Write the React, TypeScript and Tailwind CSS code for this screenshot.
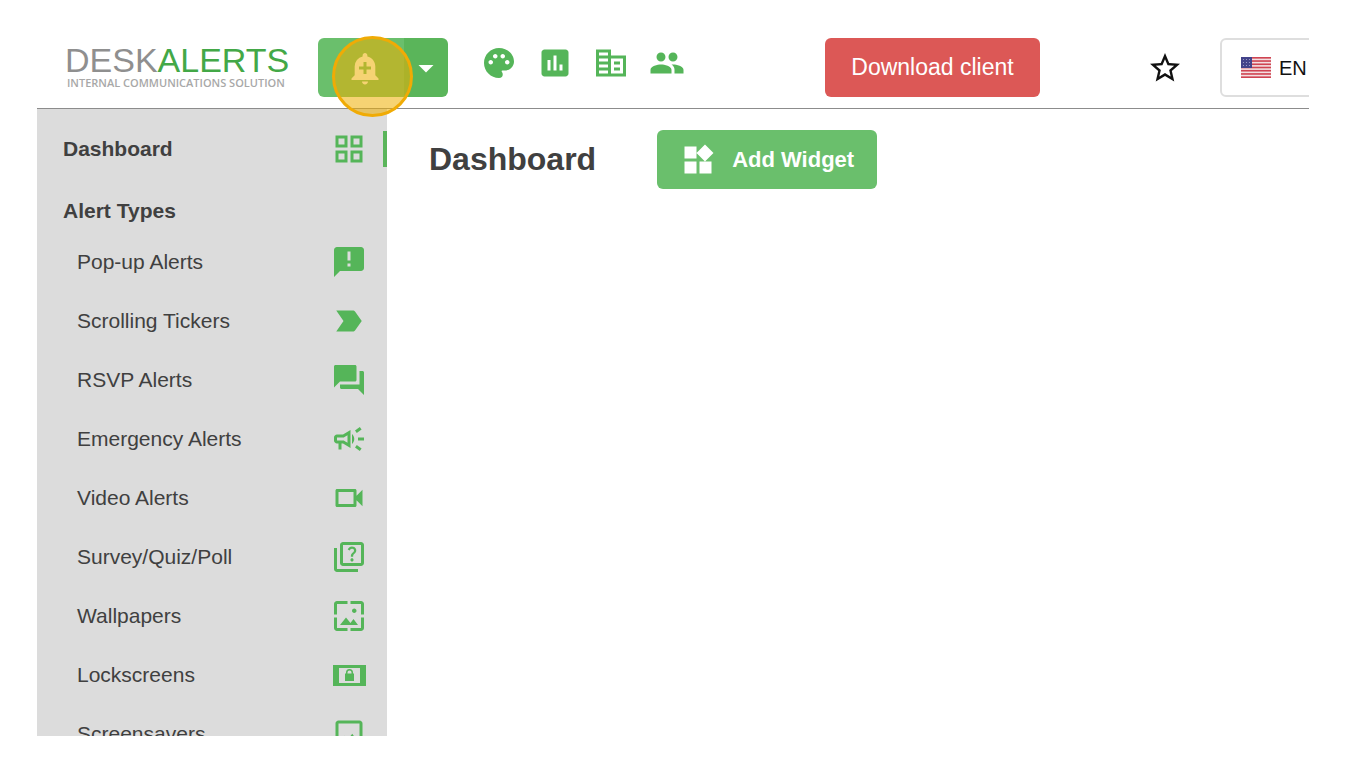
import { useState } from "react";
import type { ComponentType } from "react";
import {
  MdAddAlert,
  MdAnnouncement,
  MdArrowDropDown,
  MdAssessment,
  MdCorporateFare,
  MdForum,
  MdLabelImportant,
  MdOutlineCampaign,
  MdOutlineGridView,
  MdOutlineImage,
  MdOutlineQuiz,
  MdOutlineVideocam,
  MdPalette,
  MdPeople,
  MdStarBorder,
  MdWallpaper,
  MdWidgets,
} from "react-icons/md";

interface MenuItem {
  title: string;
  icon: ComponentType<{ size?: number }>;
}

function LockscreenIcon({ size = 36 }: { size?: number }) {
  return (
    <svg width={size} height={size} viewBox="0 0 36 36" fill="currentColor">
      <path fillRule="evenodd" d="M2 8h33v21H2zM8 11v15h21V11z" />
      <path
        fillRule="evenodd"
        d="M14 16.500h1v-1a3.500 3.500 0 0 1 7 0v1h1V24h-9zM16.500 16.500h4v-1a2 2 0 0 0-4 0z"
      />
    </svg>
  );
}

function FlagIcon() {
  return (
    <svg width="30" height="21" viewBox="0 0 30 21" className="shrink-0">
      <rect width="30" height="21" fill="#f3dfe1" />
      {[0, 1, 2, 3, 4, 5, 6].map((i) => (
        <rect key={i} y={i * 3.23} width="30" height="1.620" fill="#cf4452" />
      ))}
      <rect width="11" height="11" fill="#43438a" />
      {[2, 5, 8].map((y) =>
        [2, 5, 8].map((x) => (
          <circle key={x + "-" + y} cx={x + 0.5} cy={y + 0.5} r="0.600" fill="#a9a9cf" />
        ))
      )}
    </svg>
  );
}

const alertTypes: MenuItem[] = [
  { title: "Pop-up Alerts", icon: MdAnnouncement },
  { title: "Scrolling Tickers", icon: MdLabelImportant },
  { title: "RSVP Alerts", icon: MdForum },
  { title: "Emergency Alerts", icon: MdOutlineCampaign },
  { title: "Video Alerts", icon: MdOutlineVideocam },
  { title: "Survey/Quiz/Poll", icon: MdOutlineQuiz },
  { title: "Wallpapers", icon: MdWallpaper },
  { title: "Lockscreens", icon: LockscreenIcon },
  { title: "Screensavers", icon: MdOutlineImage },
];

const shortcuts: MenuItem[] = [
  { title: "Skins", icon: MdPalette },
  { title: "Reports", icon: MdAssessment },
  { title: "Organization", icon: MdCorporateFare },
  { title: "Users", icon: MdPeople },
];

function Header() {
  const [lang, setLang] = useState("EN");

  return (
    <header className="flex shrink-0 border-b border-[#8c8c8c] pt-[38px] pb-[11px] pl-7">
      <a href="#home" className="mt-1 w-[253px] shrink-0 whitespace-nowrap">
        <div className="text-[34px] leading-[36px] text-[#8f8f8f]">
          DESK<span className="text-[#43a847]">ALERTS</span>
        </div>
        <div className="pl-0.5 font-['Open_Sans',sans-serif] text-[11px] leading-[10px] font-semibold text-[#a8a8a8]">
          INTERNAL COMMUNICATIONS SOLUTION
        </div>
      </a>

      <div className="relative flex h-[59px] shrink-0">
        <button
          aria-label="Create alert"
          className="flex w-[86px] items-center justify-center rounded-l-md bg-[#6abf6c] pl-2 text-white"
        >
          <MdAddAlert size={36} />
        </button>
        <button
          aria-label="More alert types"
          className="flex w-11 items-center justify-center rounded-r-md bg-[#5ab55a] text-white"
        >
          <MdArrowDropDown size={36} />
        </button>
        <span className="pointer-events-none absolute -top-0.5 left-3.5 z-10 size-[81px] rounded-full border-3 border-[#f0ab05] bg-[#efaf00]/55" />
      </div>

      <nav className="ml-[33px] flex items-center gap-5 pb-2.5 text-[#55b559]">
        {shortcuts.map((item) => (
          <a key={item.title} href="#shortcut" aria-label={item.title}>
            <item.icon size={36} />
          </a>
        ))}
      </nav>

      <div className="ml-auto flex h-[59px] shrink-0 items-center">
        <button className="h-full w-[215px] rounded-md bg-[#dc5856] text-[23px] text-white">
          Download client
        </button>
        <button aria-label="Favorites" className="ml-[107px] text-[#111]">
          <MdStarBorder size={36} />
        </button>
        <div className="-mr-8 ml-[37px] flex h-full w-[121px] items-center gap-2 rounded-md border-2 border-[#dedede] pl-[19px]">
          <FlagIcon />
          <select
            aria-label="Language"
            className="w-12 appearance-none bg-transparent text-[20px] text-[#111]"
            value={lang}
            onChange={(e) => setLang(e.target.value)}
          >
            <option>EN</option>
            <option>DE</option>
          </select>
        </div>
      </div>
    </header>
  );
}

function Sidebar() {
  return (
    <aside className="w-[350px] shrink-0 bg-[#dcdcdc] pt-[22px] text-[21px] text-[#404040]">
      <a
        href="#dashboard"
        className="flex h-9 items-center justify-between border-r-4 border-[#5ab55a] pr-4 pl-[26px] font-bold"
      >
        Dashboard
        <span className="text-[#55b559]">
          <MdOutlineGridView size={36} />
        </span>
      </a>
      <h2 className="mt-[23px] pl-[26px] leading-[42px] font-bold">Alert Types</h2>
      <ul>
        {alertTypes.map((item) => (
          <li key={item.title}>
            <a href="#alerts" className="flex h-[59px] items-center justify-between pr-5 pl-10">
              {item.title}
              <span className="text-[#55b559]">
                <item.icon size={36} />
              </span>
            </a>
          </li>
        ))}
      </ul>
    </aside>
  );
}

function App() {
  return (
    <div className="h-screen bg-white pr-[43px] pb-6 pl-[37px] font-['Liberation_Sans',Arial,sans-serif]">
      <div className="flex h-full flex-col overflow-hidden">
        <Header />
        <div className="flex min-h-0 flex-1">
          <Sidebar />
          <main className="flex flex-1 items-start gap-[61px] pt-[21px] pl-[42px]">
            <h1 className="text-[32px] leading-[59px] font-bold text-[#404040]">Dashboard</h1>
            <button className="flex h-[59px] w-[220px] items-center justify-center gap-4 rounded-md bg-[#6abf6c] text-[22px] font-bold text-white">
              <MdWidgets size={36} />
              Add Widget
            </button>
          </main>
        </div>
      </div>
    </div>
  );
}

export default App;
